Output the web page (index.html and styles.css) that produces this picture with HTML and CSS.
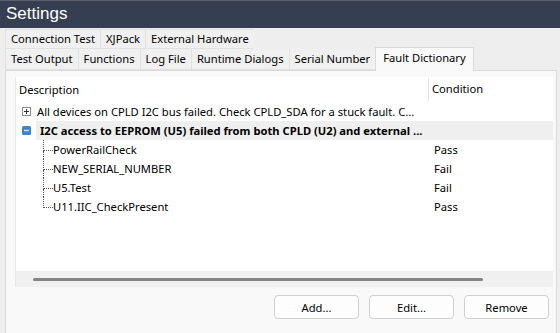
FILE: index.html
```html
<!DOCTYPE html>
<html>
<head>
    <title>Settings</title>
    <link rel="stylesheet" href="styles.css">
</head>
<body>
    <div class="titlebar">Settings</div>

    <div class="tabs">
        <div class="tab-row">
            <div class="tab">Connection Test</div>
            <div class="tab">XJPack</div>
            <div class="tab">External Hardware</div>
        </div>
        <div class="tab-row">
            <div class="tab">Test Output</div>
            <div class="tab">Functions</div>
            <div class="tab">Log File</div>
            <div class="tab">Runtime Dialogs</div>
            <div class="tab">Serial Number</div>
            <div class="tab active">Fault Dictionary</div>
        </div>
    </div>

    <div class="panel">
        <div class="tree">
            <div class="tree-body">
                <div class="row header">
                    <div class="col-desc">Description</div>
                    <div class="col-cond">Condition</div>
                </div>

                <div class="row">
                    <div class="col-desc">
                        <svg class="toggle" width="9" height="9" viewBox="0 0 9 9">
                            <rect x="0.5" y="0.5" width="8" height="8" fill="#fff" stroke="#8c8c8c"/>
                            <path d="M2 4.5h5M4.5 2v5" stroke="#333" stroke-width="1"/>
                        </svg>
                        <span class="label">All devices on CPLD I2C bus failed. Check CPLD_SDA for a stuck fault. C...</span>
                    </div>
                    <div class="col-cond"></div>
                </div>

                <div class="row selected">
                    <div class="col-desc">
                        <svg class="toggle" width="9" height="9" viewBox="0 0 9 9">
                            <rect x="0" y="0" width="9" height="9" rx="1.5" fill="#3d85c6"/>
                            <path d="M2 4.5h5" stroke="#cfe3f5" stroke-width="1.4"/>
                        </svg>
                        <span class="label bold">I2C access to EEPROM (U5) failed from both CPLD (U2) and external ...</span>
                    </div>
                    <div class="col-cond"></div>
                </div>

                <div class="row child">
                    <div class="col-desc"><span class="branch"></span><span class="label">PowerRailCheck</span></div>
                    <div class="col-cond">Pass</div>
                </div>
                <div class="row child">
                    <div class="col-desc"><span class="branch"></span><span class="label">NEW_SERIAL_NUMBER</span></div>
                    <div class="col-cond">Fail</div>
                </div>
                <div class="row child">
                    <div class="col-desc"><span class="branch"></span><span class="label">U5.Test</span></div>
                    <div class="col-cond">Fail</div>
                </div>
                <div class="row child last">
                    <div class="col-desc"><span class="branch"></span><span class="label">U11.IIC_CheckPresent</span></div>
                    <div class="col-cond">Pass</div>
                </div>
            </div>
            <div class="hscroll">
                <div class="thumb"></div>
            </div>
        </div>

        <div class="buttons">
            <button>Add...</button>
            <button>Edit...</button>
            <button>Remove</button>
        </div>
    </div>
</body>
</html>
```

FILE: styles.css
```css
* {
    box-sizing: border-box;
}
body {
    margin: 0;
    background-color: #eeeeee;
    font-family: "Noto Sans", sans-serif;
    font-size: 11.2px;
    color: #000;
    overflow: hidden;
}
.titlebar {
    height: 28px;
    background-color: #363e51;
    border-top: 1px solid #5b606b;
    color: #fff;
    font-family: "Liberation Sans", Arial, sans-serif;
    font-size: 17px;
    line-height: 26px;
    padding-left: 6px;
}
.tabs {
    padding: 1px 0 0 5px;
}
.tab-row {
    display: flex;
    align-items: flex-end;
}
.tab {
    background-color: #f0f0f0;
    border: 1px solid #e1e1e1;
    border-right: none;
    padding: 0 5px;
    height: 20px;
    line-height: 18px;
    white-space: nowrap;
}
.tab-row + .tab-row .tab {
    height: 21px;
    line-height: 20px;
    border-top: none;
}
.tab-row + .tab-row .tab.active {
    background-color: #f9f9f9;
    border: 1px solid #d9d9d9;
    border-bottom: none;
    height: 24px;
    line-height: 19px;
    padding: 0 7px;
    margin-top: -2px;
    margin-bottom: -1px;
    position: relative;
}
.panel {
    margin: 0 3px 0 5px;
    background-color: #f9f9f9;
    border: 1px solid #d9d9d9;
    padding: 6px 3px 0 9px;
    height: 270px;
}
.tree {
    background-color: #fff;
    border-left: 1px solid #e8e8e8;
}
.tree-body {
    height: 194px;
}
.row {
    display: flex;
    height: 19px;
    line-height: 19px;
}
.row.header {
    height: 25px;
    line-height: 24px;
}
.col-desc {
    flex: none;
    width: 413px;
    display: flex;
    align-items: center;
    overflow: hidden;
    white-space: nowrap;
}
.header .col-desc {
    padding-left: 3px;
    border-right: 1px solid #e5e5e5;
    height: 23px;
    margin-top: 1px;
}
.col-cond {
    flex: 1;
    padding-left: 5px;
}
.header .col-cond {
    padding-left: 3px;
}
.toggle {
    flex: none;
    margin: 0 6px 0 6px;
}
.label {
    white-space: nowrap;
}
.selected {
    background: linear-gradient(to right, #fff 20px, #efefef 20px);
}
.bold {
    font-weight: bold;
    padding-left: 3px;
}
.child .col-desc {
    padding-left: 27px;
    align-items: stretch;
}
.branch {
    flex: none;
    width: 10px;
    display: flex;
    flex-direction: column;
}
.branch::before {
    content: '';
    height: 10px;
    border-left: 1px dotted #555;
    border-bottom: 1px dotted #555;
}
.branch::after {
    content: '';
    flex: 1;
    border-left: 1px dotted #555;
}
.last .branch::after {
    border-left: none;
}
.hscroll {
    height: 16px;
    background-color: #f0f0f0;
    display: flex;
    align-items: center;
    padding-left: 17px;
}
.thumb {
    width: 450px;
    height: 3px;
    border-radius: 2px;
    background-color: #858585;
}
.buttons {
    display: flex;
    justify-content: flex-end;
    gap: 10px;
    margin-top: 8px;
    padding-right: 4px;
}
button {
    width: 85px;
    height: 24px;
    background-color: #fdfdfd;
    border: 1px solid #d0d0d0;
    border-radius: 4px;
    font-family: "Noto Sans", sans-serif;
    font-size: 11.2px;
    color: #000;
    padding: 0;
}
```
